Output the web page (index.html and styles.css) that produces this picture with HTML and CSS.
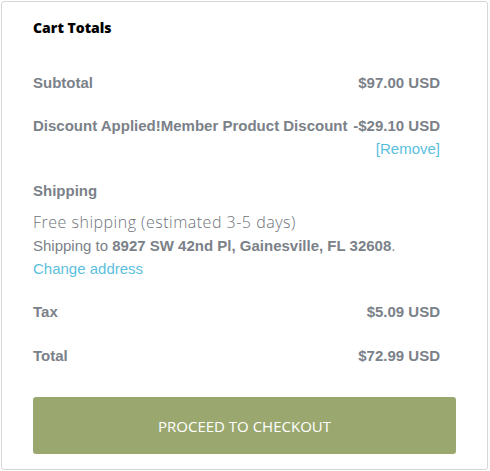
FILE: index.html
```html
<!DOCTYPE html>
<html lang="en">

<head>
    <meta charset="UTF-8">
    <meta name="viewport" content="width=device-width, initial-scale=1.0">
    <title>Cart Totals</title>
    <link rel="stylesheet" href="styles.css">
</head>

<body>
    <div class="totals">
        <h2 class="heading">Cart Totals</h2>

        <div class="row">
            <span class="label">Subtotal</span>
            <span class="value">$97.00 USD</span>
        </div>

        <div class="row discount">
            <div class="line">
                <span class="label">Discount Applied!Member Product Discount</span>
                <span class="value">-$29.10 USD</span>
            </div>
            <a href="#" class="remove">[Remove]</a>
        </div>

        <div class="row shipping">
            <span class="label">Shipping</span>
            <div class="method">Free shipping (estimated 3-5 days)</div>
            <div class="address">Shipping to <b>8927 SW 42nd Pl, Gainesville, FL 32608</b>.</div>
            <a href="#" class="change">Change address</a>
        </div>

        <div class="row">
            <span class="label">Tax</span>
            <span class="value">$5.09 USD</span>
        </div>

        <div class="row total">
            <span class="label">Total</span>
            <span class="value">$72.99 USD</span>
        </div>

        <button class="checkout">Proceed to checkout</button>
    </div>
</body>

</html>
```

FILE: styles.css
```css
body {
    margin: 0;
    font-family: "Liberation Sans", Arial, sans-serif;
    background: #fff;
}

.totals {
    margin: 1px;
    width: 423px;
    padding: 16px 31px 15px 31px;
    border: 1px solid #d6d6d6;
    border-radius: 3px;
}

.heading {
    margin: 0 0 24px 0;
    font-family: "Open Sans", sans-serif;
    font-size: 14px;
    font-weight: 800;
    line-height: 20px;
    color: #000;
}

.row {
    display: flex;
    justify-content: space-between;
    padding: 11px 16px 11px 0;
    line-height: 20px;
    font-size: 15px;
    color: #7b8189;
}

.row .label,
.row .value {
    font-weight: 700;
}

.discount {
    flex-direction: column;
    padding-top: 12px;
    padding-bottom: 10px;
}

.line {
    display: flex;
    justify-content: space-between;
}

.remove {
    align-self: flex-end;
    line-height: 22px;
    margin-top: 2px;
    color: #5bc0de;
    text-decoration: none;
}

.shipping {
    flex-direction: column;
    padding-bottom: 10px;
}

.method {
    margin-top: 10px;
    font-family: "Open Sans", sans-serif;
    font-size: 16px;
    font-weight: 300;
    letter-spacing: 0.5px;
    line-height: 23px;
    color: #6e737a;
}

.address {
    line-height: 23px;
    color: #7b8189;
}

.change {
    line-height: 24px;
    color: #5bc0de;
    text-decoration: none;
}

.total {
    padding-top: 13px;
}

.checkout {
    display: block;
    width: 100%;
    height: 57px;
    margin-top: 20px;
    border: 0;
    border-radius: 3px;
    background: #9aa870;
    color: #fff;
    font-family: "Open Sans", sans-serif;
    font-size: 15px;
    font-weight: 400;
    text-transform: uppercase;
}
```
